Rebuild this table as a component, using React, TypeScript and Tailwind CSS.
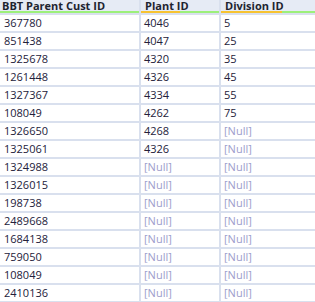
import React from "react";

const rows: [string, string | null, string | null][] = [
  ["367780", "4046", "5"],
  ["851438", "4047", "25"],
  ["1325678", "4320", "35"],
  ["1261448", "4326", "45"],
  ["1327367", "4334", "55"],
  ["108049", "4262", "75"],
  ["1326650", "4268", null],
  ["1325061", "4326", null],
  ["1324988", null, null],
  ["1326015", null, null],
  ["198738", null, null],
  ["2489668", null, null],
  ["1684138", null, null],
  ["759050", null, null],
  ["108049", null, null],
  ["2410136", null, null],
];

function Cell({ v, pad }: { v: string | null; pad: string }) {
  return (
    <div className={`bg-white h-[16px] ${pad} leading-[16px] whitespace-nowrap overflow-hidden`}>
      {v === null ? (
        <span className="text-[#9d9dcb]">[Null]</span>
      ) : (
        <span className="text-[#23213a]">{v}</span>
      )}
    </div>
  );
}

export default function App() {
  return (
    <div
      className="w-[315px] h-[302px] overflow-hidden bg-[#d9e0ee] text-[11px]"
      style={{ fontFamily: '"Open Sans", "Noto Sans", sans-serif' }}
    >
      <div className="grid grid-cols-[139px_78px_94px] gap-x-[2px] gap-y-[2px]">
        <div className="bg-[#e6ebf5] flex flex-col">
          <div className="h-[11px] pl-[2px] font-bold text-[#1e2430] leading-[11px] whitespace-nowrap">
            BBT Parent Cust ID
          </div>
          <div className="h-[2px] bg-[#9df07a]" />
        </div>
        <div className="bg-[#e6ebf5] flex flex-col">
          <div className="h-[11px] pl-[4px] font-bold text-[#1e2430] leading-[11px] whitespace-nowrap">
            Plant ID
          </div>
          <div className="h-[2px] flex">
            <div className="w-[39px] bg-[#f7c331]" />
            <div className="flex-1 bg-[#9df07a]" />
          </div>
        </div>
        <div className="bg-[#e6ebf5] flex flex-col">
          <div className="h-[11px] pl-[4px] font-bold text-[#1e2430] leading-[11px] whitespace-nowrap">
            Division ID
          </div>
          <div className="h-[2px] flex">
            <div className="w-[61px] bg-[#f7c331]" />
            <div className="flex-1 bg-[#9df07a]" />
          </div>
        </div>
        {rows.map((r, i) => (
          <React.Fragment key={i}>
            <Cell v={r[0]} pad="pl-[4px]" />
            <Cell v={r[1]} pad="pl-[3px]" />
            <Cell v={r[2]} pad="pl-[3px]" />
          </React.Fragment>
        ))}
      </div>
    </div>
  );
}
